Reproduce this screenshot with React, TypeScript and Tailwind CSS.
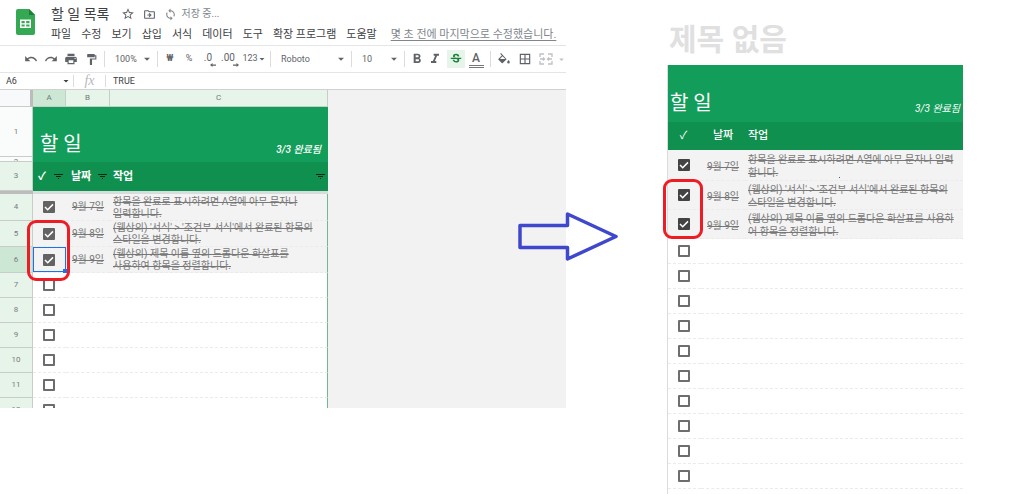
import React from 'react';
import {
  MdArrowDropDown,
  MdBorderAll,
  MdFormatBold,
  MdFormatItalic,
  MdFormatPaint,
  MdOutlineDriveFileMove,
  MdPrint,
  MdRedo,
  MdStarBorder,
  MdStrikethroughS,
  MdSync,
  MdUndo,
} from 'react-icons/md';

const MENUS = ['파일', '수정', '보기', '삽입', '서식', '데이터', '도구', '확장 프로그램', '도움말'];

type Task = { row: number; date: string; lines: string[] };

const SHEET_TASKS: Task[] = [
  { row: 4, date: '9월 7일', lines: ['항목을 완료로 표시하려면 A열에 아무 문자나', '입력합니다.'] },
  { row: 5, date: '9월 8일', lines: ["(웹상의) '서식' > '조건부 서식'에서 완료된 항목의", '스타일을 변경합니다.'] },
  { row: 6, date: '9월 9일', lines: ['(웹상의) 제목 이름 옆의 드롭다운 화살표를', '사용하여 항목을 정렬합니다.'] },
];

const PAGE_TASKS: Task[] = [
  { row: 1, date: '9월 7일', lines: ['항목을 완료로 표시하려면 A열에 아무 문자나 입력', '합니다.'] },
  { row: 2, date: '9월 8일', lines: ["(웹상의) '서식' > '조건부 서식'에서 완료된 항목의", '스타일을 변경합니다.'] },
  { row: 3, date: '9월 9일', lines: ['(웹상의) 제목 이름 옆의 드롭다운 화살표를 사용하', '어 항목을 정렬합니다.'] },
];

const PAGE_EMPTY = [4, 5, 6, 7, 8, 9, 10, 11, 12, 13, 14];

function Check({ checked, label, dark }: { checked?: boolean; label: string; dark?: boolean }) {
  return (
    <label className="mx-auto grid size-3 place-items-center">
      <input
        type="checkbox"
        defaultChecked={checked}
        aria-label={label}
        className={`peer size-3 appearance-none rounded-[1px] border-2 [grid-area:1/1] ${
          dark ? 'border-[#6e6e6e] checked:border-[#434343] checked:bg-[#434343]' : 'border-[#6c6c6e] checked:border-[#636363] checked:bg-[#636363]'
        }`}
      />
      <svg viewBox="0 0 12 12" className="pointer-events-none hidden size-3 [grid-area:1/1] peer-checked:block" aria-hidden="true">
        <path d="M2 6 4.700 8.700 10 3.400" fill="none" stroke="#fff" strokeWidth="1.500" />
      </svg>
    </label>
  );
}

function Sep() {
  return <span className="mx-[3px] h-4 w-px shrink-0 bg-[#dadce0]" />;
}

function Tool({ label, className, children }: { label: string; className: string; children: React.ReactNode }) {
  return (
    <button type="button" aria-label={label} className={`flex h-[18px] shrink-0 items-center justify-center ${className}`}>
      {children}
    </button>
  );
}

function Drop({ label, value, className }: { label: string; value: string; className: string }) {
  return (
    <label className={`grid shrink-0 items-center ${className}`}>
      <select aria-label={label} className="w-full appearance-none bg-transparent pl-[7px] leading-4 outline-none [grid-area:1/1]">
        <option>{value}</option>
      </select>
      <MdArrowDropDown className="pointer-events-none size-[14px] justify-self-end [grid-area:1/1]" />
    </label>
  );
}

function SheetsLogo() {
  return (
    <svg viewBox="0 0 19 26" className="h-[26px] w-[19px]" aria-hidden="true">
      <path d="M2 0h11l6 6v18a2 2 0 0 1-2 2H2a2 2 0 0 1-2-2V2a2 2 0 0 1 2-2z" fill="#34a853" />
      <path d="M13 0l6 6h-6z" fill="#188038" />
      <path d="M4 10.500h11v8.500H4zM5.500 12v2.200h3.200V12zm4.700 0v2.200h3.300V12zm-4.700 3.500v2.100h3.200v-2.100zm4.700 0v2.100h3.300v-2.100z" fill="#fff" fillRule="evenodd" />
    </svg>
  );
}

function Filter() {
  return (
    <svg viewBox="0 0 9 7" className="h-[7px] w-[9px] shrink-0" fill="#0c2417" aria-hidden="true">
      <path d="M0 1h9v1H0zM2 3h5v1H2zM4 5h1v1H4z" />
    </svg>
  );
}

function Bucket() {
  return (
    <svg viewBox="0 0 14 14" className="size-[14px]" fill="currentColor" aria-hidden="true">
      <path d="M4 1 3.200 1.800l1.600 1.600L1.500 6.700a.8.8 0 0 0 0 1.100l3.200 3.200a.8.8 0 0 0 1.100 0l3.800-3.800zM5.500 4.200 8.300 7H2.900zM11.500 8s-1.300 1.400-1.300 2.300a1.300 1.300 0 0 0 2.600 0C12.800 9.400 11.500 8 11.500 8z" />
    </svg>
  );
}

function Decimal({ text, right }: { text: string; right?: boolean }) {
  return (
    <span className="flex flex-col items-end pt-0.5">
      <span className="text-[10px] leading-[10px]">{text}</span>
      <svg viewBox="0 0 6 4" className="-mr-1 h-1 w-1.5" aria-hidden="true">
        {right ? (
          <path d="M0 1.500h3.500V0L6 2 3.500 4V2.700H0z" fill="currentColor" />
        ) : (
          <path d="M6 1.500H2.500V0L0 2l2.500 2V2.700H6z" fill="currentColor" />
        )}
      </svg>
    </span>
  );
}

function Struck({ lines }: { lines: string[] }) {
  return (
    <>
      {lines.map((line) => (
        <s key={line} className="block whitespace-nowrap">
          {line}
        </s>
      ))}
    </>
  );
}

const rowHead = 'border-r border-b border-[#c9cdca] p-0 text-center text-[8px] font-normal text-[#7a7a7a]';
const cellLine = 'border-b border-dashed border-[#ebebeb] p-0';

function Sheet() {
  return (
    <div className="h-[318px] overflow-hidden bg-[#f2f2f2]">
      <table className="w-[328px] table-fixed border-separate border-spacing-0 bg-white">
        <colgroup>
          <col className="w-[33px]" />
          <col className="w-[33px]" />
          <col className="w-[44px]" />
          <col className="w-[218px]" />
        </colgroup>
        <thead>
          <tr className="h-[17px] text-[8px] leading-3 text-[#777]">
            <td className="border-r-[3px] border-b border-r-[#bcbcbc] border-b-[#c9cdca] bg-[#f8f9fa] p-0" />
            <th className="border-r border-b border-[#c3cfc7] bg-[#cce8d5] p-0 font-normal">A</th>
            <th className="border-r border-b border-[#c3cfc7] bg-[#e6f4ea] p-0 font-normal">B</th>
            <th className="border-r border-b border-[#c3cfc7] bg-[#e6f4ea] p-0 font-normal">C</th>
          </tr>
        </thead>
        <tbody>
          <tr className="h-[50px]">
            <th className={`${rowHead} bg-[#fafbfb]`}>1</th>
            <td colSpan={3} rowSpan={2} className="bg-[#129e5a] p-0 align-bottom text-white">
              <div className="flex items-end justify-between pr-[7px] pb-1.5 pl-[7px]">
                <span className="text-xl leading-6">할 일</span>
                <em className="text-[10px] leading-3 font-medium">3/3 완료됨</em>
              </div>
            </td>
          </tr>
          <tr className="h-[5px]">
            <th className={`${rowHead} bg-[#fafbfb]`}>
              <div className="h-1 overflow-hidden leading-[10px]">2</div>
            </th>
          </tr>
          <tr className="h-[29px] text-[11px] leading-4 font-bold text-white">
            <th className={`${rowHead} bg-[#e6f4ea]`}>3</th>
            <td className="bg-[#0f904f] p-0">
              <div className="flex items-center justify-between pr-[3px] pl-[5px]">
                ✓<Filter />
              </div>
            </td>
            <td className="bg-[#0f904f] p-0">
              <div className="flex items-center justify-between pr-[3px] pl-[5px] whitespace-nowrap">
                날짜
                <Filter />
              </div>
            </td>
            <td className="bg-[#0f904f] p-0">
              <div className="flex items-center justify-between pr-[3px] pl-[3px]">
                작업
                <Filter />
              </div>
            </td>
          </tr>
          <tr className="h-[3px]">
            <td className="bg-[#bcbcbc] p-0" />
            <td colSpan={3} className="bg-[#d5dedd] p-0" />
          </tr>
          {SHEET_TASKS.map((task) => (
            <tr
              key={task.row}
              className={`bg-[#f3f3f3] text-[10px] leading-3 text-[#777] ${task.row === 4 ? 'h-[27px]' : 'h-[26px]'}`}
            >
              <th className={`${rowHead} ${task.row === 6 ? 'bg-[#cce8d5]' : 'bg-[#e6f4ea]'}`}>{task.row}</th>
              <td className={`${cellLine} relative pr-0.5`}>
                <Check checked label={`${task.row}행 완료`} />
                {task.row === 5 && (
                  <span className="pointer-events-none absolute -top-px -left-[6px] z-20 h-[61px] w-[43px] rounded-[9px] border-[3px] border-[#ee1c25]" />
                )}
                {task.row === 6 && (
                  <span className="pointer-events-none absolute inset-0 z-10 border border-[#1a73e8]">
                    <span className="absolute -right-0.5 -bottom-0.5 size-1 bg-[#1a73e8]" />
                  </span>
                )}
              </td>
              <td className={`${cellLine} text-center whitespace-nowrap`}>
                <s>{task.date}</s>
              </td>
              <td className={`${cellLine} border-r border-r-[#6dba91] pt-px pl-[3px] [border-right-style:solid]`}>
                <Struck lines={task.lines} />
              </td>
            </tr>
          ))}
          {[7, 8, 9, 10, 11, 12].map((row) => (
            <tr key={row} className="h-[25px]">
              <th className={`${rowHead} bg-[#e6f4ea]`}>{row}</th>
              <td className={`${cellLine} pr-0.5`}>
                <Check label={`${row}행 완료`} />
              </td>
              <td className={cellLine} />
              <td className={`${cellLine} border-r border-r-[#6dba91] [border-right-style:solid]`} />
            </tr>
          ))}
        </tbody>
      </table>
    </div>
  );
}

function Editor() {
  return (
    <section className="relative min-w-0 self-start text-[#5f6368]">
      <header className="flex h-[46px] border-b border-[#e3e5e8] pt-[5px] pl-4">
        <div className="pt-1">
          <SheetsLogo />
        </div>
        <div className="flex min-w-0 flex-col gap-1 pl-4">
          <div className="flex h-[18px] items-center">
            <h1 className="text-sm leading-[18px] text-[#3c4043]">할 일 목록</h1>
            <button type="button" aria-label="별표" className="ml-3">
              <MdStarBorder className="size-[14px]" />
            </button>
            <button type="button" aria-label="이동" className="ml-2">
              <MdOutlineDriveFileMove className="size-[13px]" />
            </button>
            <MdSync className="ml-2 size-[13px] text-[#80868b]" />
            <span className="ml-1 text-[10px] leading-4 text-[#80868b]">저장 중...</span>
          </div>
          <nav className="flex gap-[10px] text-[11px] leading-4 whitespace-nowrap text-[#3c4043]">
            {MENUS.map((menu) => (
              <button key={menu} type="button">
                {menu}
              </button>
            ))}
            <a href="#history" className="ml-1 text-[#80868b] underline underline-offset-2">
              몇 초 전에 마지막으로 수정했습니다.
            </a>
          </nav>
        </div>
      </header>

      <div className="flex h-[27px] items-center overflow-hidden border-b border-[#e3e5e8] pl-[21px] text-[9px]">
        <Tool label="실행취소" className="w-5"><MdUndo className="size-[14px]" /></Tool>
        <Tool label="재실행" className="w-5"><MdRedo className="size-[14px]" /></Tool>
        <Tool label="인쇄" className="w-5"><MdPrint className="size-[14px]" /></Tool>
        <Tool label="서식 복사" className="w-5"><MdFormatPaint className="size-[13px]" /></Tool>
        <Sep />
        <Drop label="확대/축소" value="100%" className="w-[46px]" />
        <Sep />
        <Tool label="통화" className="w-[18px] font-bold">₩</Tool>
        <Tool label="퍼센트" className="w-5">%</Tool>
        <Tool label="소수점 줄이기" className="w-[18px]"><Decimal text=".0" /></Tool>
        <Tool label="소수점 늘리기" className="w-[22px]"><Decimal text=".00" right /></Tool>
        <Tool label="숫자 형식" className="w-7 pl-1">
          123
          <MdArrowDropDown className="-ml-0.5 size-3 shrink-0" />
        </Tool>
        <Sep />
        <Drop label="글꼴" value="Roboto" className="w-[74px]" />
        <Sep />
        <Drop label="글꼴 크기" value="10" className="w-[46px]" />
        <Sep />
        <Tool label="굵게" className="w-[18px]"><MdFormatBold className="size-4" /></Tool>
        <Tool label="기울임꼴" className="w-[18px]"><MdFormatItalic className="size-4" /></Tool>
        <Tool label="취소선" className="ml-[3px] w-[18px] bg-[#e6f4ea] text-[#188038]"><MdStrikethroughS className="size-[14px]" /></Tool>
        <Tool label="텍스트 색상" className="w-[22px]">
          <span className="w-[15px] border-b-[3px] border-double border-[#777] text-xs leading-[14px] font-medium">A</span>
        </Tool>
        <Sep />
        <Tool label="채우기 색상" className="w-5"><Bucket /></Tool>
        <Tool label="테두리" className="w-[22px]"><MdBorderAll className="size-[14px]" /></Tool>
        <Tool label="셀 병합" className="w-5 text-[#bdc1c6]">
          <svg viewBox="0 0 14 12" className="h-3 w-[14px]" fill="none" stroke="currentColor" strokeWidth="1.300" aria-hidden="true">
            <path d="M5 1H1v3M9 1h4v3M5 11H1V8M9 11h4V8M1 6h4M9 6h4M4 4.500 5.500 6 4 7.500M10 4.500 8.500 6l1.500 1.500" />
          </svg>
        </Tool>
        <MdArrowDropDown className="size-[11px] shrink-0 text-[#bdc1c6]" />
      </div>

      <div className="flex h-[17px] items-center border-b border-[#cfd1d3] text-[9px] leading-3 text-[#3c4043]">
        <input aria-label="이름 상자" defaultValue="A6" className="w-[60px] pl-1.5 outline-none" />
        <MdArrowDropDown className="size-3 shrink-0" />
        <span className="ml-px h-3 w-px bg-[#dadce0]" />
        <span className="w-[31px] text-center font-['Liberation_Serif',serif] text-sm leading-3 text-[#b6b9bd] italic">fx</span>
        <span className="h-3 w-px bg-[#dadce0]" />
        <input aria-label="수식 입력줄" defaultValue="TRUE" className="min-w-0 flex-1 pl-[7px] outline-none" />
      </div>

      <Sheet />

      <svg viewBox="0 0 106 56" className="pointer-events-none absolute top-[208px] -right-[54px] h-14 w-[106px]" aria-hidden="true">
        <path d="M6 17.500H53.500V6L102 28.500 53.500 51V39.500H6z" fill="none" stroke="#3f48cc" strokeWidth="3.500" strokeLinejoin="round" />
      </svg>
    </section>
  );
}

function Published() {
  return (
    <section className="col-start-3 min-w-0 pt-5">
      <h2 className="pl-0.5 text-[30px] leading-10 font-bold text-[#e0e0e0]">제목 없음</h2>
      <table className="mt-[5px] w-full table-fixed border-separate border-spacing-0 border-l border-[#dcdcdc]">
        <colgroup>
          <col className="w-[33px]" />
          <col className="w-[44px]" />
          <col />
        </colgroup>
        <thead>
          <tr className="h-[57px]">
            <td colSpan={3} className="bg-[#129e5a] p-0 align-bottom text-white">
              <div className="flex items-end justify-between pr-[3px] pb-[7px] pl-0.5">
                <span className="text-xl leading-6">할 일</span>
                <em className="text-[10px] leading-3">3/3 완료됨</em>
              </div>
            </td>
          </tr>
          <tr className="h-7 bg-[#0f904f] text-[11px] leading-4 text-white">
            <th className="p-0 pr-0.5 font-normal">✓</th>
            <th className="p-0 font-medium">날짜</th>
            <th className="p-0 pl-[3px] text-left font-medium">작업</th>
          </tr>
        </thead>
        <tbody>
          {PAGE_TASKS.map((task) => (
            <tr
              key={task.row}
              className={`bg-[#f3f3f3] text-[10px] leading-[13px] text-[#777] ${task.row === 1 ? 'h-[31px]' : 'h-[29px]'}`}
            >
              <td className={`${cellLine} relative pr-0.5`}>
                <Check checked dark label={`${task.date} 완료`} />
                {task.row === 2 && (
                  <span className="pointer-events-none absolute -top-[2px] -left-[5px] z-20 h-[60px] w-[40px] rounded-[9px] border-[3px] border-[#ee1c25]" />
                )}
              </td>
              <td className={`${cellLine} pt-0.5 text-center whitespace-nowrap`}>
                <s>{task.date}</s>
              </td>
              <td className={`${cellLine} relative pt-0.5 pl-[3px]`}>
                <Struck lines={task.lines} />
                {task.row === 1 && <span className="absolute bottom-0.5 left-[94px] size-px bg-[#555]" />}
              </td>
            </tr>
          ))}
          {PAGE_EMPTY.map((row) => (
            <tr key={row} className="h-[25px]">
              <td className={`${cellLine} pr-0.5`}>
                <Check dark label={`${row}번째 항목 완료`} />
              </td>
              <td className={cellLine} />
              <td className={cellLine} />
            </tr>
          ))}
        </tbody>
      </table>
    </section>
  );
}

export default function App() {
  return (
    <main className="grid h-screen grid-cols-[566fr_101fr_296fr_61fr] overflow-hidden bg-white font-[Roboto,'Noto_Sans_CJK_KR',sans-serif]">
      <Editor />
      <Published />
    </main>
  );
}
